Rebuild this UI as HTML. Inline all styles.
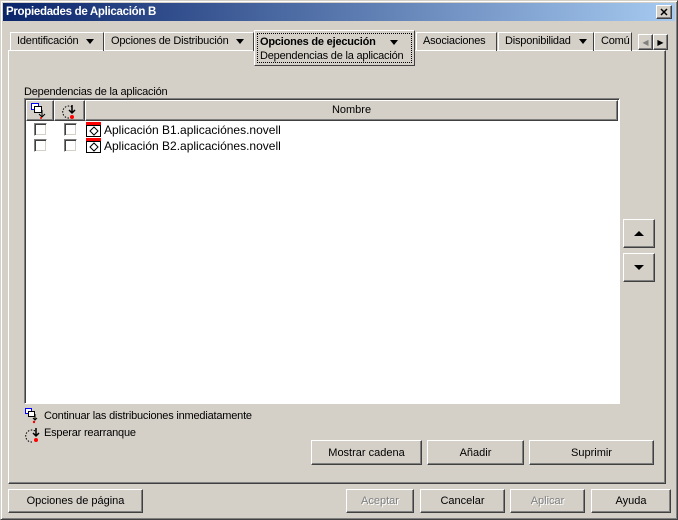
<!DOCTYPE html><html><head><style>
body{margin:0;width:678px;height:520px;background:#d4d0c8;font:11px "Liberation Sans",sans-serif;position:relative;overflow:hidden;color:#000}
.a{position:absolute}
.btn{position:absolute;border:1px solid;border-color:#fff #404040 #404040 #fff;box-shadow:inset -1px -1px #808080,inset 1px 1px #d4d0c8;text-align:center;box-sizing:border-box;display:flex;align-items:center;justify-content:center;background:#d4d0c8}
.dis{color:#808080;text-shadow:1px 1px #fff}
.tab{position:absolute;top:32px;height:19px;border:1px solid;border-color:#fff #404040 transparent #fff;border-bottom:none;box-sizing:border-box;padding:2px 0 0 6px;white-space:nowrap;overflow:hidden;letter-spacing:-0.2px}
.tri{display:inline-block;border:4px solid transparent;border-top:5px solid #000;border-bottom:none;vertical-align:middle;margin-left:8px}
.cb{position:absolute;width:13px;height:13px;background:#fff;border:1px solid;border-color:#808080 #fff #fff #808080;box-shadow:inset 1px 1px #404040,inset -1px -1px #d4d0c8;box-sizing:border-box}
.hd{position:absolute;top:100px;height:21px;box-sizing:border-box;border:1px solid;border-color:#fff #404040 #404040 #fff;box-shadow:inset -1px -1px #808080}
</style></head><body>
<div class="a" style="left:0;top:0;width:676px;height:518px;border:1px solid;border-color:#d4d0c8 #404040 #404040 #d4d0c8;box-shadow:inset 1px 1px #fff,inset -1px -1px #808080"></div>
<div class="a" style="left:3px;top:3px;width:672px;height:18px;background:linear-gradient(90deg,#0a246a,#a6caf0);color:#fff;font-weight:bold;font-size:11.5px;line-height:18px;padding-left:3px;box-sizing:border-box;letter-spacing:-0.3px">Propiedades de Aplicación B</div>
<div class="btn" style="left:656px;top:5px;width:16px;height:14px;font-size:11px;font-weight:bold">✕</div>
<div class="a" style="left:8px;top:50px;width:658px;height:434px;border:1px solid;border-color:#fff #404040 #404040 #fff;box-shadow:inset -1px -1px #808080;box-sizing:border-box"></div>
<div class="tab" style="left:10px;width:94px">Identificación<span class="tri"></span></div>
<div class="tab" style="left:104px;width:150px">Opciones de Distribución<span class="tri"></span></div>
<div class="a" style="left:254px;top:30px;width:161px;height:36px;border:1px solid;border-color:#fff #404040 #404040 #fff;background:#d4d0c8;box-sizing:border-box"></div>
<div class="a" style="left:257px;top:33px;width:155px;height:30px;border:1px dotted #000;box-sizing:border-box;padding:1px 0 0 2px;line-height:14px;white-space:nowrap;letter-spacing:-0.2px"><b>Opciones de ejecución</b><span class="tri" style="margin-left:14px"></span><br>Dependencias de la aplicación</div>
<div class="tab" style="left:416px;width:81px">Asociaciones</div>
<div class="tab" style="left:498px;width:96px">Disponibilidad<span class="tri"></span></div>
<div class="tab" style="left:594px;width:38px">Comú</div>
<div class="btn" style="left:638px;top:34px;width:15px;height:16px;color:#808080;font-size:8px">◀</div>
<div class="btn" style="left:653px;top:34px;width:15px;height:16px;font-size:8px">▶</div>
<div class="a" style="left:24px;top:86px;letter-spacing:-0.2px">Dependencias de la aplicación</div>
<div class="a" style="left:24px;top:98px;width:596px;height:306px;background:#fff;border:1px solid;border-color:#808080 #fff #fff #808080;box-shadow:inset 1px 1px #404040;box-sizing:border-box"></div>
<div class="a" style="left:26px;top:100px;width:592px;height:21px;background:#d4d0c8"></div>
<div class="hd" style="left:26px;width:28px"><svg width="20" height="18" style="margin:1px 0 0 3px"><rect x="1.5" y="1.5" width="7" height="6" fill="#fff" stroke="#00f"/><rect x="4.5" y="4.5" width="7" height="6" fill="#fff" stroke="#000"/><path d="M12 8v6M9 12l3 3 3-3" stroke="#000" fill="none"/><circle cx="11" cy="16" r="1" fill="red"/></svg></div>
<div class="hd" style="left:54px;width:31px"><svg width="20" height="18" style="margin:1px 0 0 5px"><path d="M9 16a6 6 0 1 1 3-11" stroke="#000" fill="none" stroke-dasharray="1.5 1.5"/><path d="M12 3v7M9 8l3 3 3-3" stroke="#000" stroke-width="1.5" fill="none"/><circle cx="12" cy="15" r="2" fill="red"/></svg></div>
<div class="hd" style="left:85px;width:533px;text-align:center;line-height:19px">Nombre</div>
<div class="cb" style="left:34px;top:123px"></div><div class="cb" style="left:64px;top:123px"></div>
<div class="cb" style="left:34px;top:139px"></div><div class="cb" style="left:64px;top:139px"></div>
<svg class="a" style="left:86px;top:122px" width="16" height="32"><g><rect x="0" y="0" width="15" height="3" fill="red"/><rect x="0.5" y="3.5" width="14" height="11" fill="#fff" stroke="#000"/><path d="M4 9l4-4 4 4-4 4z" fill="none" stroke="#000"/></g><g transform="translate(0,16)"><rect x="0" y="0" width="15" height="3" fill="red"/><rect x="0.5" y="3.5" width="14" height="11" fill="#fff" stroke="#000"/><path d="M4 9l4-4 4 4-4 4z" fill="none" stroke="#000"/></g></svg>
<div class="a" style="left:104px;top:122px;font-size:12px;line-height:16px">Aplicación B1.aplicaciónes.novell<br>Aplicación B2.aplicaciónes.novell</div>
<div class="btn" style="left:623px;top:219px;width:32px;height:29px"><span style="border:5px solid transparent;border-bottom:5px solid #000;border-top:none"></span></div>
<div class="btn" style="left:623px;top:253px;width:32px;height:29px"><span style="border:5px solid transparent;border-top:5px solid #000;border-bottom:none"></span></div>
<svg class="a" style="left:24px;top:407px" width="20" height="36"><rect x="1.5" y="1.5" width="6" height="5" fill="#fff" stroke="#00f"/><rect x="4.5" y="4.5" width="6" height="5" fill="#fff" stroke="#000"/><path d="M11 7v6M9 11l2 2 2-2" stroke="#000" fill="none"/><circle cx="10" cy="15" r="1.2" fill="red"/><path d="M8 35a6 6 0 1 1 3-11" stroke="#000" fill="none" stroke-dasharray="1.5 1.5"/><path d="M12 21v7M9 26l3 3 3-3" stroke="#000" stroke-width="1.5" fill="none"/><circle cx="12" cy="33" r="2" fill="red"/></svg>
<div class="a" style="left:44px;top:410px;letter-spacing:-0.2px">Continuar las distribuciones inmediatamente</div>
<div class="a" style="left:44px;top:427px;letter-spacing:-0.2px">Esperar rearranque</div>
<div class="btn" style="left:311px;top:440px;width:111px;height:25px">Mostrar cadena</div>
<div class="btn" style="left:427px;top:440px;width:97px;height:25px">Añadir</div>
<div class="btn" style="left:529px;top:440px;width:125px;height:25px">Suprimir</div>
<div class="btn" style="left:8px;top:489px;width:135px;height:24px">Opciones de página</div>
<div class="btn dis" style="left:346px;top:489px;width:68px;height:24px">Aceptar</div>
<div class="btn" style="left:420px;top:489px;width:85px;height:24px">Cancelar</div>
<div class="btn dis" style="left:510px;top:489px;width:75px;height:24px">Aplicar</div>
<div class="btn" style="left:591px;top:489px;width:80px;height:24px">Ayuda</div>
</body></html>
